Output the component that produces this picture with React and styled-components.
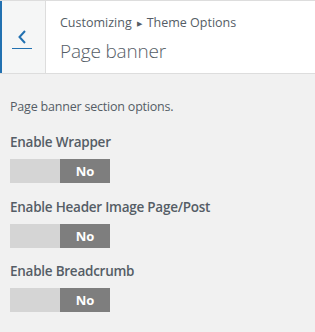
import React from "react";
import styled, { createGlobalStyle } from "styled-components";

const Global = createGlobalStyle`
  html, body { margin: 0; padding: 0; background: #f1f1f1; }
  body { font-family: "Open Sans", "Noto Sans", sans-serif; color: #555d66; }
`;

const Panel = styled.div`
  width: 315px;
  height: 332px;
  background: #f1f1f1;
  overflow: hidden;
`;

const Header = styled.header`
  display: flex;
  height: 72px;
  background: #fff;
  border-top: 1px solid #ddd;
  border-bottom: 1px solid #ddd;
`;

const BackButton = styled.button`
  width: 46px;
  flex: none;
  padding: 29px 4px 0 0;
  margin: 0;
  background: #f5f6f6;
  border: none;
  border-left: 2px solid #2271b1;
  border-right: 1px solid #ddd;
  display: flex;
  flex-direction: column;
  align-items: center;
  justify-content: flex-start;
  gap: 4px;
  cursor: pointer;

  svg { display: block; }
`;

const Underline = styled.span`
  display: block;
  width: 20px;
  height: 1px;
  background: #2271b1;
`;

const TitleBlock = styled.div`
  display: flex;
  flex-direction: column;
  padding: 13px 0 0 14px;
`;

const Crumb = styled.div`
  font-size: 12.5px;
  line-height: 18px;
  color: #555d66;
  display: flex;
  align-items: center;
  gap: 5px;
`;

const Arrow = styled.span`
  font-size: 7px;
  line-height: 1;
`;

const Title = styled.h1`
  margin: 6px 0 0;
  font-size: 19px;
  font-weight: 300;
  letter-spacing: -0.2px;
  line-height: 26px;
  color: #555d66;
`;

const Body = styled.div`
  padding: 23px 10px 0 10px;
  display: flex;
  flex-direction: column;
`;

const Description = styled.p`
  margin: 0 0 15px;
  font-size: 12.5px;
  letter-spacing: -0.2px;
  line-height: 20px;
`;

const Control = styled.div`
  display: flex;
  flex-direction: column;
  margin-bottom: 13.5px;
`;

const Label = styled.div`
  font-size: 13.5px;
  font-weight: 600;
  letter-spacing: -0.25px;
  line-height: 20px;
  margin-bottom: 7px;
  color: #555d66;
`;

const Toggle = styled.div`
  display: flex;
  width: 100px;
  height: 24px;
`;

const Half = styled.span`
  flex: 1;
  display: flex;
  align-items: center;
  justify-content: center;
  background: ${(p) => (p.$active ? "#7e7e7e" : "#d5d5d5")};
  color: #fff;
  font-size: 13px;
  font-weight: 700;
`;

const controls = [
  "Enable Wrapper",
  "Enable Header Image Page/Post",
  "Enable Breadcrumb",
];

export default function App() {
  return (
    <Panel>
      <Global />
      <Header>
        <BackButton aria-label="Back">
          <svg width="8" height="14" viewBox="0 0 8 14">
            <path d="M7 1 L1.5 7 L7 13" fill="none" stroke="#2271b1" strokeWidth="2" />
          </svg>
          <Underline />
        </BackButton>
        <TitleBlock>
          <Crumb>
            Customizing <Arrow>▶</Arrow> Theme Options
          </Crumb>
          <Title>Page banner</Title>
        </TitleBlock>
      </Header>
      <Body>
        <Description>Page banner section options.</Description>
        {controls.map((c) => (
          <Control key={c}>
            <Label>{c}</Label>
            <Toggle>
              <Half />
              <Half $active>No</Half>
            </Toggle>
          </Control>
        ))}
      </Body>
    </Panel>
  );
}
